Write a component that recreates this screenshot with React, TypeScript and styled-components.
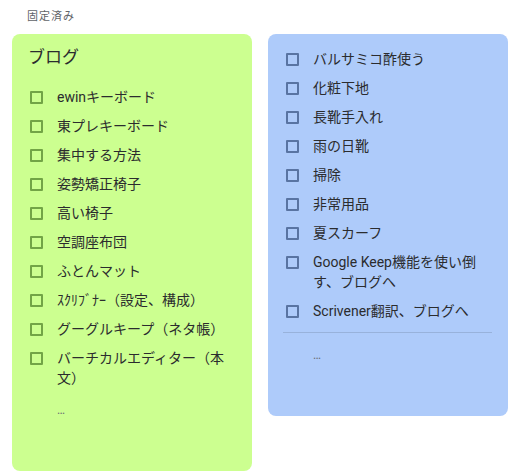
import React from "react";
import styled, { createGlobalStyle } from "styled-components";

const GlobalStyle = createGlobalStyle`
  body {
    margin: 0;
    background: #ffffff;
    font-family: "Roboto", "Noto Sans CJK JP", sans-serif;
    color: #2b2c2e;
  }
`;

type Note = {
  title?: string;
  color: string;
  box: string;
  items: string[];
  divider?: boolean;
};

const notes: Note[] = [
  {
    title: "ブログ",
    color: "#ccff90",
    box: "rgba(40, 90, 10, 0.55)",
    items: [
      "ewinキーボード",
      "東プレキーボード",
      "集中する方法",
      "姿勢矯正椅子",
      "高い椅子",
      "空調座布団",
      "ふとんマット",
      "ｽｸﾘﾌﾞﾅｰ（設定、構成）",
      "グーグルキープ（ネタ帳）",
      "バーチカルエディター（本文）",
    ],
  },
  {
    color: "#aecbfa",
    box: "rgba(20, 45, 90, 0.55)",
    divider: true,
    items: [
      "バルサミコ酢使う",
      "化粧下地",
      "長靴手入れ",
      "雨の日靴",
      "掃除",
      "非常用品",
      "夏スカーフ",
      "Google Keep機能を使い倒す、ブログへ",
      "Scrivener翻訳、ブログへ",
    ],
  },
];

const Page = styled.div`
  padding: 10px 0 0 12px;
`;

const SectionLabel = styled.div`
  padding-left: 15px;
  font-size: 11px;
  line-height: 14px;
  letter-spacing: 1px;
  color: #5f6368;
`;

const Grid = styled.div`
  margin-top: 10px;
  display: grid;
  grid-template-columns: 240px 240px;
  column-gap: 16px;
  align-items: start;
`;

const Card = styled.div<{ $bg: string; $top: number }>`
  background: ${(p) => p.$bg};
  border-radius: 8px;
  padding: ${(p) => p.$top}px 16px 51px 0;
`;

const Title = styled.div`
  padding-left: 16px;
  font-size: 17px;
  line-height: 22px;
  margin-bottom: 14px;
`;

const Row = styled.div`
  display: flex;
  align-items: flex-start;
  padding: 5px 0 4px 18px;
  font-size: 14px;
  line-height: 20px;
`;

const Box = styled.span<{ $color: string }>`
  flex: none;
  box-sizing: border-box;
  width: 13px;
  height: 13px;
  margin: 4px 14px 0 0;
  border: 2px solid ${(p) => p.$color};
  border-radius: 1px;
`;

const Divider = styled.div`
  margin: 7px 0 0 15px;
  height: 1px;
  background: rgba(0, 0, 0, 0.12);
`;

const More = styled.div<{ $gap: number }>`
  margin-top: ${(p) => p.$gap}px;
  padding-left: 45px;
  font-size: 12px;
  line-height: 20px;
  color: #6b6f74;
`;

const NoteCard = ({ note }: { note: Note }) => (
  <Card $bg={note.color} $top={note.title ? 12 : 10}>
    {note.title && <Title>{note.title}</Title>}
    {note.items.map((item) => (
      <Row key={item}>
        <Box $color={note.box} />
        <span>{item}</span>
      </Row>
    ))}
    {note.divider && <Divider />}
    <More $gap={note.divider ? 12 : 8}>…</More>
  </Card>
);

const App = () => (
  <>
    <GlobalStyle />
    <Page>
      <SectionLabel>固定済み</SectionLabel>
      <Grid>
        {notes.map((note, i) => (
          <NoteCard key={i} note={note} />
        ))}
      </Grid>
    </Page>
  </>
);

export default App;
